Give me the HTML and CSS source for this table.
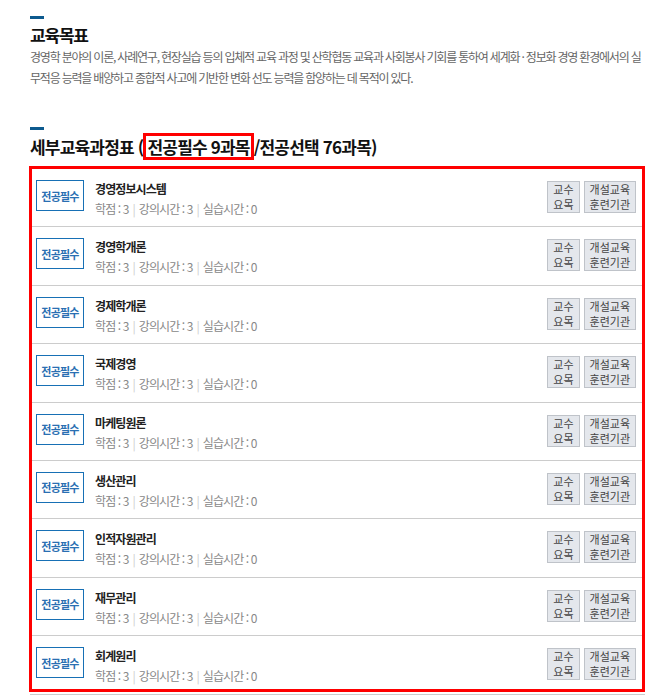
FILE: index.html
```html
<!DOCTYPE html>
<html lang="ko">
<head>
    <meta charset="UTF-8">
    <meta name="viewport" content="width=device-width, initial-scale=1.0">
    <title>교육목표</title>
    <link rel="stylesheet" href="styles.css">
</head>
<body>
<div class="content">
    <div class="section">
        <div class="title-bar"></div>
        <h2 class="sec-title">교육목표</h2>
        <p class="desc">경영학 분야의 이론, 사례연구, 현장실습 등의 입체적 교육 과정 및 산학협동 교육과 사회봉사 기회를 통하여 세계화 · 정보화 경영 환경에서의 실무적응 능력을 배양하고 종합적 사고에 기반한 변화 선도 능력을 함양하는 데 목적이 있다.</p>
    </div>
    <div class="section section-course">
        <div class="title-bar"></div>
        <h2 class="sec-title">세부교육과정표 (<span class="mark">전공필수 9과목</span>/전공선택 76과목)</h2>
        <div class="course-wrap">
            <ul class="course-list" id="courseList"></ul>
        </div>
    </div>
</div>

<script>
    // 전공필수 과목 목록
    var courses = ["경영정보시스템", "경영학개론", "경제학개론", "국제경영", "마케팅원론", "생산관리", "인적자원관리", "재무관리", "회계원리"];

    function render(){
        var list = document.getElementById("courseList");
        var html = "";
        for (var i = 0; i < courses.length; i++) {
            html += '<li class="course-item">'
                + '<span class="badge">전공필수</span>'
                + '<div class="course-info">'
                + '<div class="course-name">' + courses[i] + '</div>'
                + '<div class="course-meta"><span>학점 : 3</span><span>강의시간 : 3</span><span>실습시간 : 0</span></div>'
                + '</div>'
                + '<div class="course-btns">'
                + '<a href="#" class="btn-sm">교수<br>요목</a>'
                + '<a href="#" class="btn-sm">개설교육<br>훈련기관</a>'
                + '</div>'
                + '</li>';
        }
        list.innerHTML = html;
    }
    render();
</script>
</body>
</html>
```

FILE: styles.css
```css
body{
    margin: 0;
    padding: 0;
    font-family: "Noto Sans CJK KR", "Noto Sans", sans-serif;
    color: #222;
    background: #fff;
}
.content{
    padding: 16px 26px 0 30px;
}
.title-bar{
    width: 14px;
    height: 3px;
    background-color: #0d5a8e;
}
.sec-title{
    margin: 6px 0 1px;
    font-size: 17px;
    line-height: 20px;
    font-weight: bold;
    letter-spacing: -1.2px;
    color: #111;
}
.desc{
    margin: 0;
    font-size: 12px;
    line-height: 21px;
    color: #666;
    letter-spacing: -1.2px;
}
.section-course{
    margin-top: 39px;
}
.section-course .sec-title{
    margin-top: 3px;
    margin-bottom: 9px;
    line-height: 27px;
    letter-spacing: -0.8px;
}
.mark{
    display: inline-block;
    vertical-align: top;
    border: 3px solid #f00;
    padding: 0 1px;
    line-height: 21px;
}
.course-wrap{
    position: relative;
}
/* 강조 표시 박스 */
.course-wrap::after{
    content: "";
    position: absolute;
    top: -3px;
    left: -1px;
    right: 0;
    bottom: 3px;
    border: 3px solid #f00;
    pointer-events: none;
}
.course-list{
    list-style: none;
    margin: 0;
    padding: 0;
}
.course-item{
    display: flex;
    align-items: flex-start;
    box-sizing: border-box;
    height: 58.4px;
    padding: 11px 9px 0 6px;
    border-bottom: 1px solid #ccc;
}
.badge{
    flex: none;
    width: 48px;
    height: 31px;
    box-sizing: border-box;
    border: 1px solid #1770b5;
    color: #2a6fb2;
    font-size: 11px;
    font-weight: bold;
    letter-spacing: -0.8px;
    display: flex;
    align-items: center;
    justify-content: center;
}
.course-info{
    flex: 1;
    margin-left: 11px;
    padding-top: 1px;
}
.course-name{
    font-size: 12px;
    font-weight: bold;
    line-height: 16px;
    letter-spacing: -0.9px;
    color: #222;
}
.course-meta{
    margin-top: 4px;
    font-size: 12px;
    line-height: 16px;
    color: #888;
    letter-spacing: -0.9px;
}
.course-meta span + span::before{
    content: "|";
    color: #ccc;
    margin: 0 4px 0 4px;
}
.course-btns{
    display: flex;
    gap: 4px;
    margin-top: 1px;
}
.btn-sm{
    display: block;
    box-sizing: border-box;
    height: 32px;
    padding: 0 5px;
    background-color: #e4e7ec;
    border: 1px solid #bfc3c9;
    color: #444;
    font-size: 11px;
    line-height: 15px;
    text-align: center;
    text-decoration: none;
    letter-spacing: 0;
}
```
